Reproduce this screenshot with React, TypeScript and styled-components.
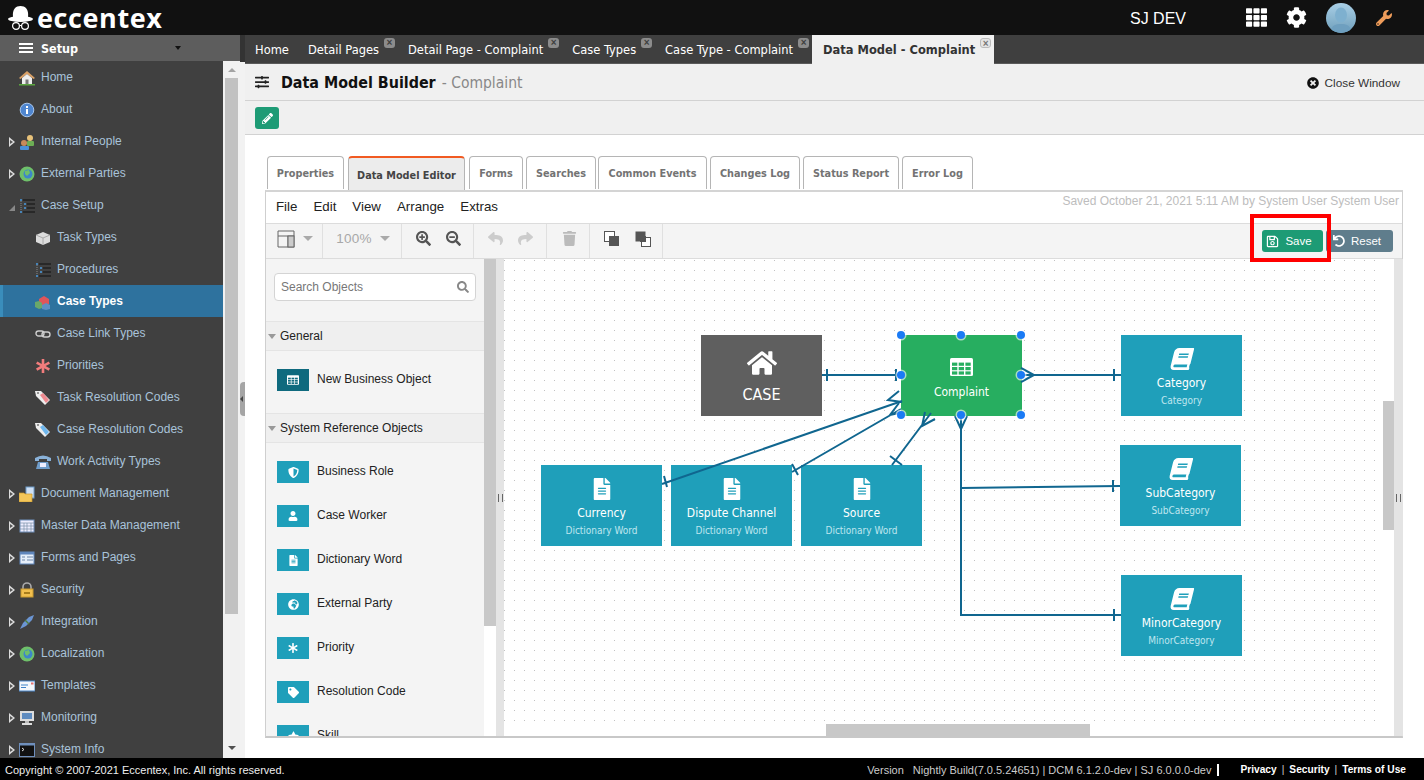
import React from "react";
import styled, { createGlobalStyle } from "styled-components";
import {
  FaHome, FaFileAlt, FaBook, FaRegSave, FaUndo, FaReply, FaShare, FaPencilAlt, FaTrash, FaCog, FaTh,
  FaTimesCircle, FaSlidersH, FaSearch, FaSearchPlus, FaSearchMinus, FaStar, FaTag, FaAsterisk,
  FaGlobeAfrica, FaUser, FaShieldAlt, FaWrench,
} from "react-icons/fa";

const tahoma = `"DejaVu Sans Condensed", "Noto Sans", sans-serif`;
const arial = `"Liberation Sans", Arial, sans-serif`;

const Global = createGlobalStyle`
  html, body { margin: 0; padding: 0; height: 100%; overflow: hidden; background: #fff; }
  * { box-sizing: border-box; }
  #root { height: 100%; }
`;

const Page = styled.div`
  width: 1424px; height: 780px; display: flex; flex-direction: column; font-family: ${arial}; overflow: hidden;
`;
const TopBar = styled.header`
  height: 35px; background: #111; display: flex; align-items: center; flex: none; padding-left: 8px; color: #fff;
`;
const LogoText = styled.span`
  font-family: "Open Sans", sans-serif; font-weight: 700; font-size: 27px; line-height: 35px; margin-left: 4px; letter-spacing: 0.6px;
`;
const Spacer = styled.div`flex: 1;`;
const EnvName = styled.span`
  font-size: 16px; width: 116px; margin-top: 3px;
`;
const TopIcons = styled.div`
  display: flex; align-items: center; width: 178px;
`;
const Avatar = styled.div`
  width: 30px; height: 30px; border-radius: 50%; background: linear-gradient(#a9cfe6, #6f9fbb); margin: 0 0 0 19px; overflow: hidden; display: flex;
`;
const Body = styled.div`flex: 1; display: flex; min-height: 0;`;
const Side = styled.aside`
  width: 240px; flex: none; display: flex; flex-direction: column;
`;
const SetupHead = styled.div`
  height: 26px; background: #5d5d5d; display: flex; align-items: center; padding-left: 19px; color: #fff; flex: none; position: relative;
`;
const Burger = styled.div`
  width: 14px; height: 10px; border-top: 2px solid #fff; border-bottom: 2px solid #fff; position: relative; margin-right: 8px;
  &::after { content: ""; position: absolute; left: 0; right: 0; top: 2px; height: 2px; background: #fff; }
`;
const SetupLabel = styled.span`
  font-family: ${tahoma}; font-weight: 700; font-size: 12.5px; flex: 1;
`;
const SetupCaret = styled.span`
  width: 0; height: 0; border: 3px solid transparent; border-top: 4px solid #111; margin: 3px 59px 0 0;
`;
const SideBody = styled.div`flex: 1; display: flex; min-height: 0;`;
const MenuList = styled.nav`
  width: 223px; background: #404040; overflow: hidden;
`;
const MenuRow = styled.div<{ $level: number; $active?: boolean }>`
  height: 32px; display: flex; align-items: center; position: relative;
  padding-left: ${(p) => (p.$level ? 35 : 19)}px;
  background: ${(p) => (p.$active ? "#2e729e" : "transparent")};
  border-left: ${(p) => (p.$active ? "3px solid #3a8dbb" : "0")};
  ${(p) => p.$active && "padding-left: 32px;"}
`;
const MenuIconBox = styled.span`
  width: 16px; height: 16px; display: block; flex: none; margin-top: 2px;
`;
const MenuLabel = styled.span<{ $active?: boolean }>`
  font-size: 12px; margin-left: 6px; margin-top: -1px; white-space: nowrap;
  color: ${(p) => (p.$active ? "#fff" : "#a9c3da")};
  font-weight: ${(p) => (p.$active ? 700 : 400)};
`;
const Expander = styled.span<{ $open?: boolean }>`
  position: absolute; left: 9px; top: 12px; width: 0; height: 0;
  border-style: solid; border-width: 5px 0 5px 6px; border-color: transparent transparent transparent #ddd;
  &::after {
    content: ""; position: absolute; left: -5px; top: -2px; width: 0; height: 0;
    border-style: solid; border-width: 2px 0 2px 3px; border-color: transparent transparent transparent #555;
  }
  ${(p) => p.$open && `
    border-width: 0 0 6px 6px; border-color: transparent transparent #888 transparent; top: 16px;
    &::after { display: none; }
  `}
`;
const SideScroll = styled.div`
  width: 17px; background: #f1f1f1; position: relative; display: flex; flex-direction: column; align-items: center; padding: 17px 0 144px;
  &::before { content: ""; position: absolute; top: 7px; border: 4px solid transparent; border-top: 0; border-bottom: 4px solid #a3a3a3; }
  &::after { content: ""; position: absolute; bottom: 8px; border: 4px solid transparent; border-bottom: 0; border-top: 4px solid #505050; }
`;
const ScrollThumb = styled.div`
  width: 13px; flex: 1; background: #c1c1c1;
`;
const Gutter = styled.div`
  width: 5px; flex: none; background: #f2f2f2; display: flex; flex-direction: column; align-items: center; justify-content: flex-start; padding-top: 347px;
  box-shadow: inset 0 27px 0 #333;
`;
const GutterHandle = styled.div`
  width: 5px; height: 34px; background: #a5a5a5; border-radius: 4px 0 0 4px; display: flex; align-items: center;
  &::after { content: ""; border: 3px solid transparent; border-left: 0; border-right: 3px solid #444; }
`;
const Main = styled.main`flex: 1; display: flex; flex-direction: column; min-width: 0;`;
const TabBar = styled.div`
  height: 29px; background: #3f3f3f; display: flex; flex: none; border-bottom: 1px solid #5a5a5a;
`;
const TopTab = styled.div<{ $active?: boolean; $close?: boolean }>`
  height: 29px; line-height: 29px; font-family: ${tahoma}; font-size: 12.75px; white-space: nowrap; position: relative;
  color: ${(p) => (p.$active ? "#333" : "#fff")};
  background: ${(p) => (p.$active ? "#f0f0f0" : "transparent")};
  padding: 0 ${(p) => (p.$close ? 19 : 9)}px 0 ${(p) => (p.$active ? 11 : 10)}px;
  font-weight: ${(p) => (p.$active ? 600 : 400)};
`;
const TabClose = styled.span<{ $active?: boolean }>`
  position: absolute; right: 3px; top: 3px; width: 11px; height: 10px; border-radius: 3px;
  background: ${(p) => (p.$active ? "#e4e4e4" : "#8c8c8c")};
  border: ${(p) => (p.$active ? "1px solid #bbb" : "0")};
  color: ${(p) => (p.$active ? "#777" : "#3f3f3f")};
  font: 700 10px/10px ${arial}; text-align: center;
`;
const TitleRow = styled.div`
  height: 37px; background: #f0f0f0; border-bottom: 1px solid #d2d2d2; display: flex; align-items: center; padding: 0 24px 0 10px; flex: none;
`;
const Title = styled.h1`
  margin: 0 0 0 12px; font-family: ${tahoma}; font-size: 15.9px; font-weight: 700; color: #111;
`;
const SubTitle = styled.span`
  font-family: ${tahoma}; font-size: 15.5px; color: #888; margin: 1px 0 0 6px; flex: 1;
`;
const CloseWindow = styled.span`
  font-size: 11.8px; color: #333; display: flex; align-items: center; gap: 6px; margin-top: 2px;
`;
const ActionRow = styled.div`
  height: 34px; background: #f0f0f0; border-bottom: 1px solid #d2d2d2; padding: 6px 10px; flex: none;
`;
const EditBtn = styled.div`
  width: 24px; height: 22px; border-radius: 3px; background: #1d9b75; color: #fff; display: flex; align-items: center; justify-content: center;
`;
const Content = styled.div`
  flex: 1; background: #fff; padding: 21px 21px 20px 20px; display: flex; flex-direction: column; min-height: 0; position: relative;
`;
const FormTabs = styled.div`
  height: 34px; display: flex; padding-left: 2px; flex: none; position: relative; z-index: 1;
`;
const FormTab = styled.div<{ $w: number; $gap: number; $active?: boolean }>`
  width: ${(p) => p.$w}px; margin-right: ${(p) => p.$gap}px; height: ${(p) => (p.$active ? 34 : 33)}px;
  border: 1px solid #b5b5b5; border-bottom: 0; border-radius: 4px 4px 0 0; text-align: center;
  font-family: ${tahoma}; font-size: 10.8px; font-weight: 700;
  line-height: ${(p) => (p.$active ? 35 : 34)}px;
  color: ${(p) => (p.$active ? "#444" : "#737373")};
  background: ${(p) => (p.$active ? "#ececec" : "#fff")};
  ${(p) => p.$active && "border-top: 2px solid #f15a22;"}
`;
const Frame = styled.section`
  width: 1138px; flex: 1; border: 1px solid #cfcfcf; border-top: 2px solid #d4d4d4; border-bottom: 2px solid #c8c8c8; display: flex; flex-direction: column; min-height: 0; background: #fff;
`;
const MenuBar = styled.div`
  height: 32px; flex: none; border-bottom: 1px solid #dcdcdc; display: flex; padding-left: 10px; gap: 16px; position: relative; font-size: 13.3px; line-height: 29px; color: #222;
`;
const SavedNote = styled.span`
  position: absolute; right: 3px; top: 0; line-height: 18px; font-size: 12px; color: #bdbdbd;
`;
const ToolBar = styled.div`
  height: 35px; flex: none; background: #f4f4f4; border-bottom: 1px solid #dcdcdc; display: flex; align-items: stretch;
`;
const ToolGroup = styled.div<{ $w: number; $shift?: number; $color?: string }>`
  width: ${(p) => p.$w}px; border-right: 1px solid #e0e0e0; display: flex; align-items: center; justify-content: center; gap: 15px;
  color: ${(p) => p.$color || "#555"}; padding: 0 0 5px ${(p) => p.$shift || 0}px;
`;
const Caret = styled.span`
  width: 0; height: 0; border: 5px solid transparent; border-bottom: 0; border-top: 5px solid #aaa; margin-left: -7px;
`;
const Zoom = styled.span`
  font-size: 13.5px; color: #a8a8a8; letter-spacing: 0.2px;
`;
const ToolRight = styled.div`
  flex: 1; display: flex; align-items: center; justify-content: flex-end; padding: 0 9px 0 0; gap: 3px;
`;
const ActionBtn = styled.div<{ $bg: string; $w: number; $pr: number }>`
  width: ${(p) => p.$w}px; height: 22px; border-radius: 3px; background: ${(p) => p.$bg}; color: #fff; font-size: 11.5px;
  display: flex; align-items: center; justify-content: center; gap: 6px; padding-right: ${(p) => p.$pr}px;
`;
const RedBox = styled.div`
  position: absolute; left: 1005px; top: 79px; width: 81px; height: 48px; border: 4px solid #f00;
`;
const EditorBody = styled.div`flex: 1; display: flex; min-height: 0;`;
const Palette = styled.div`
  width: 218px; background: #f4f4f4; overflow: hidden; flex: none;
`;
const SearchWrap = styled.div`padding: 14px 8px 20px;`;
const SearchBox = styled.div`
  height: 28px; background: #fff; border: 1px solid #d4d4d4; border-radius: 4px; display: flex; align-items: center; justify-content: space-between; padding: 0 6px; font-size: 12px; color: #777;
`;
const SectionHead = styled.div`
  height: 30px; background: #efefef; border-top: 1px solid #e4e4e4; border-bottom: 1px solid #e4e4e4; display: flex; align-items: center; font-size: 12px; color: #222; padding-left: 2px; gap: 4px;
  &::before { content: ""; border: 4px solid transparent; border-bottom: 0; border-top: 5px solid #999; }
`;
const ItemList = styled.div`
  padding: 18px 0 22px 11px; display: flex; flex-direction: column; gap: 22px;
`;
const Item = styled.div`
  height: 22px; display: flex; align-items: center; gap: 8px; font-size: 12px; color: #222;
`;
const ItemIcon = styled.span<{ $dark?: boolean }>`
  width: 32px; height: 22px; background: ${(p) => (p.$dark ? "#0f6a7e" : "#1f9fba")}; color: #fff; display: flex; align-items: center; justify-content: center; flex: none;
`;
const ItemLabel = styled.span`margin-top: -3px;`;
const VScroll = styled.div<{ $top: number; $h: number; $ml?: number }>`
  width: 12px; flex: none; background: #fff; padding-top: ${(p) => p.$top}px; margin-left: ${(p) => p.$ml || 0}px;
  &::before { content: ""; display: block; height: ${(p) => p.$h}px; background: #c8c8c8; }
`;
const Splitter = styled.div<{ $w: number; $mt: number }>`
  width: ${(p) => p.$w}px; flex: none; background: #e4e4e4; padding-top: ${(p) => p.$mt}px; display: flex; justify-content: center;
  &::before { content: ""; width: 3px; height: 8px; border-left: 1px solid #666; border-right: 1px solid #666; }
`;
const CanvasCol = styled.div`
  width: 879px; flex: none; display: flex; flex-direction: column;
`;
const Canvas = styled.div`
  flex: 1; position: relative; overflow: hidden; background-color: #fff;
  background-image: radial-gradient(circle at 0.5px 0.5px, #c2c2c2 0.7px, transparent 0.7px);
  background-size: 10px 10px; background-position: 0 1px;
`;
const HScroll = styled.div`
  height: 12px; flex: none; background: #fff; padding-left: 322px;
  &::before { content: ""; display: block; width: 264px; height: 12px; background: #c8c8c8; }
`;
const Lines = styled.svg`
  position: absolute; left: 0; top: 0; z-index: 2; pointer-events: none;
`;
const Node = styled.div<{ $x: number; $y: number; $bg: string }>`
  position: absolute; left: ${(p) => p.$x - 504}px; top: ${(p) => p.$y - 259}px; width: 121px; height: 81px; background: ${(p) => p.$bg};
  color: #fff; display: flex; flex-direction: column; align-items: center; font-family: ${tahoma}; text-align: center;
`;
const NodeIcon = styled.div<{ $mt: number }>`
  margin-top: ${(p) => p.$mt}px; height: 24px; display: flex; align-items: center; justify-content: center;
`;
const NodeName = styled.div<{ $size: number; $mt: number }>`
  font-size: ${(p) => p.$size}px; line-height: 16px; margin-top: ${(p) => p.$mt}px; white-space: nowrap;
`;
const NodeSub = styled.div`
  font-size: 10px; line-height: 12px; margin-top: 4px; color: #bfe6ef; white-space: nowrap;
`;
const Footer = styled.footer`
  height: 22px; background: #000; flex: none; display: flex; align-items: center; padding: 1px 18px 0 5px; font-size: 11px; color: #ddd; white-space: nowrap;
`;
const Copy = styled.span`flex: 1; color: #eee;`;
const Version = styled.span`margin-right: 9px; color: #ccc;`;
const Build = styled.span`color: #ccc; padding-right: 6px; border-right: 2px solid #fff; line-height: 12px; margin-right: 21px;`;
const Links = styled.span`color: #fff; font-weight: 700; font-size: 10.2px;`;
const LinkSep = styled.span`font-weight: 400; margin: 0 5px; color: #ccc;`;

const TableGlyph = ({ w, h, cell }: { w: number; h: number; cell: string }) => (
  <svg width={w} height={h} viewBox="0 0 23 18">
    <rect width="23" height="18" rx="1.5" fill="#fff" />
    {[0, 1, 2].map((r) =>
      [0, 1, 2].map((c) => (
        <rect key={`${r}${c}`} x={2 + c * 6.7} y={4.6 + r * 4.4} width="5.3" height="3.2" fill={cell} />
      ))
    )}
  </svg>
);

type Kind = "home" | "info" | "people" | "globe" | "tree" | "brick" | "bricks" | "link" | "star" | "tagR" | "tagB" | "phone" | "doc" | "grid" | "form" | "lock" | "plug" | "mail" | "monitor" | "term";

const Drawn: Record<Kind, React.ReactNode> = {
  home: <><path d="M0 8 8 1l8 7-1.5 1L8 4 1.5 9z" fill="#d9a066" /><path d="M3 8l5-4 5 4v6H3z" fill="#eee" /><rect x="6.5" y="9.5" width="3" height="4.5" fill="#777" /><rect x="0" y="14" width="16" height="1.5" fill="#5aa63f" /></>,
  info: <><circle cx="8" cy="8" r="6.8" fill="#4f86d0" stroke="#a9c8ef" /><rect x="7" y="7" width="2" height="5" fill="#fff" /><rect x="7" y="4" width="2" height="2" fill="#fff" /></>,
  people: <><circle cx="11" cy="4" r="3" fill="#e8c27a" /><rect x="8" y="7" width="7" height="5" rx="1" fill="#6dae55" /><circle cx="5" cy="9" r="3" fill="#c98a5a" /><rect x="1" y="12" width="9" height="4" rx="1" fill="#4a90d9" /></>,
  globe: <><circle cx="8" cy="8" r="7.5" fill="#6fc06a" /><circle cx="9" cy="8" r="4.5" fill="#3e86c9" /><path d="M6 5l4-1 1 3-3 3-2-2z" fill="#6fc06a" /></>,
  tree: <><circle cx="2" cy="2" r="1" fill="#4a9be0" /><circle cx="6" cy="6" r="1" fill="#4a9be0" /><circle cx="6" cy="10" r="1" fill="#4a9be0" /><circle cx="2" cy="14" r="1" fill="#4a9be0" /><path d="M4 2h12M8 6h8M8 10h8M4 14h12" stroke="#111" strokeWidth="1" /><path d="M2 3v10" stroke="#888" strokeDasharray="1 1" /></>,
  brick: <><path d="M1 5l7-3 7 3v7l-7 3-7-3z" fill="#ddd" /><path d="M1 5l7 3 7-3M8 8v7" stroke="#aaa" fill="none" /></>,
  bricks: <><path d="M4 5l5-3 5 3v5l-5 2-5-2z" fill="#e0555a" /><path d="M0 8l4-1 3 2v5l-3 1-4-2z" fill="#6aa86a" /><path d="M7 11l4-2 4 2v4l-4 1-4-1z" fill="#5d8fc4" /></>,
  link: <><rect x="1" y="5" width="8" height="5" rx="2.5" fill="none" stroke="#ccc" strokeWidth="1.4" /><rect x="7" y="6" width="8" height="5" rx="2.5" fill="none" stroke="#ccc" strokeWidth="1.4" /></>,
  star: <path d="M6.7 1h2.6v5l4.4-2.4 1.3 2.2L10.6 8l4.4 2.6-1.3 2.2-4.4-2.5V15H6.7v-4.7l-4.4 2.5L1 10.6 5.4 8 1 5.8l1.3-2.2L6.7 6z" fill="#f27c7c" />,
  tagR: <><path d="M0 1h6l9 9-5 5-9-9z" fill="#eee" /><path d="M5 5l3-2 6 7-3 3z" fill="#ef8a90" /><circle cx="3" cy="3" r="1" fill="#777" /></>,
  tagB: <><path d="M0 1h6l9 9-5 5-9-9z" fill="#eee" /><path d="M5 5l3-2 6 7-3 3z" fill="#6eb7ee" /><circle cx="3" cy="3" r="1" fill="#777" /></>,
  phone: <><path d="M0 4q8-5 16 0v3h-4V5H4v2H0z" fill="#8ab2d9" /><path d="M3 8h10l2 7H1z" fill="#6f9cc9" /><rect x="5" y="9" width="6" height="4" fill="#eef" /></>,
  doc: <><rect x="7" y="1" width="8" height="11" fill="#cfe0f5" stroke="#6f9cc9" /><path d="M0 7h5l1 1h7v8H0z" fill="#f3c65a" stroke="#c99a2e" strokeWidth="0.7" /></>,
  grid: <><rect x="1" y="2" width="14" height="12" fill="#eef" stroke="#6f8fbc" /><path d="M1 5h14M1 8h14M1 11h14M5 5v9M8 5v9M12 5v9" stroke="#7a8fa8" strokeWidth="0.7" /></>,
  form: <><rect x="1" y="2" width="14" height="12" fill="#e6effa" stroke="#5f86bc" /><rect x="1" y="2" width="14" height="2.5" fill="#5f86bc" /><path d="M3 7h3M8 7h6M3 10h3M8 10h6" stroke="#6d86a8" /></>,
  lock: <><path d="M4 8V5a4 4 0 0 1 8 0v3" fill="none" stroke="#aaa" strokeWidth="1.6" /><rect x="2" y="7" width="12" height="8" fill="#f1bf4e" stroke="#c99a2e" /><rect x="5" y="10" width="6" height="2" fill="#a87d1c" /></>,
  plug: <><path d="M1 15 4 9 10 3l5-2-2 5-6 6z" fill="#6b95d3" /><path d="M6 6l4 4" stroke="#4f7c3c" strokeWidth="1.4" /></>,
  mail: <><rect x="0" y="3" width="16" height="10" fill="#f3f7fc" stroke="#4a86c9" /><path d="M2 7h7M2 9.5h5" stroke="#3f83c9" /><rect x="12" y="4.5" width="2.5" height="2" fill="#e57373" /></>,
  monitor: <><rect x="1" y="1" width="14" height="10" fill="#ddd" /><rect x="3" y="3" width="10" height="6" fill="#5f8cc0" /><rect x="6" y="11" width="4" height="2" fill="#bbb" /><rect x="3" y="13" width="10" height="2" fill="#ddd" /></>,
  term: <><rect x="0.5" y="1.5" width="15" height="13" fill="#111" stroke="#6f8fbc" /><rect x="1" y="2" width="14" height="1.5" fill="#6f8fbc" /><path d="M3 6l2 1.5L3 9" stroke="#ddd" fill="none" /></>,
};

const MenuIcon = ({ kind }: { kind: Kind }) => (
  <MenuIconBox><svg width="16" height="16" viewBox="0 0 16 16">{Drawn[kind]}</svg></MenuIconBox>
);

const menu: { label: string; kind: Kind; level: number; exp?: "closed" | "open"; active?: boolean }[] = [
  { label: "Home", kind: "home", level: 0 },
  { label: "About", kind: "info", level: 0 },
  { label: "Internal People", kind: "people", level: 0, exp: "closed" },
  { label: "External Parties", kind: "globe", level: 0, exp: "closed" },
  { label: "Case Setup", kind: "tree", level: 0, exp: "open" },
  { label: "Task Types", kind: "brick", level: 1 },
  { label: "Procedures", kind: "tree", level: 1 },
  { label: "Case Types", kind: "bricks", level: 1, active: true },
  { label: "Case Link Types", kind: "link", level: 1 },
  { label: "Priorities", kind: "star", level: 1 },
  { label: "Task Resolution Codes", kind: "tagR", level: 1 },
  { label: "Case Resolution Codes", kind: "tagB", level: 1 },
  { label: "Work Activity Types", kind: "phone", level: 1 },
  { label: "Document Management", kind: "doc", level: 0, exp: "closed" },
  { label: "Master Data Management", kind: "grid", level: 0, exp: "closed" },
  { label: "Forms and Pages", kind: "form", level: 0, exp: "closed" },
  { label: "Security", kind: "lock", level: 0, exp: "closed" },
  { label: "Integration", kind: "plug", level: 0, exp: "closed" },
  { label: "Localization", kind: "globe", level: 0, exp: "closed" },
  { label: "Templates", kind: "mail", level: 0, exp: "closed" },
  { label: "Monitoring", kind: "monitor", level: 0, exp: "closed" },
  { label: "System Info", kind: "term", level: 0, exp: "closed" },
];

const topTabs = [
  { label: "Home" },
  { label: "Detail Pages", close: true },
  { label: "Detail Page - Complaint", close: true },
  { label: "Case Types", close: true },
  { label: "Case Type - Complaint", close: true },
  { label: "Data Model - Complaint", close: true, active: true },
];
const formTabs = [
  { label: "Properties", w: 77, gap: 4 },
  { label: "Data Model Editor", w: 117, gap: 4 },
  { label: "Forms", w: 54, gap: 3 },
  { label: "Searches", w: 70, gap: 2 },
  { label: "Common Events", w: 109, gap: 3 },
  { label: "Changes Log", w: 90, gap: 3 },
  { label: "Status Report", w: 96, gap: 3 },
  { label: "Error Log", w: 71, gap: 0 },
];
const sys: { label: string; icon: React.ReactNode }[] = [
  { label: "Business Role", icon: <FaShieldAlt size={11} /> },
  { label: "Case Worker", icon: <FaUser size={10} /> },
  { label: "Dictionary Word", icon: <FaFileAlt size={11} /> },
  { label: "External Party", icon: <FaGlobeAfrica size={11} /> },
  { label: "Priority", icon: <FaAsterisk size={10} /> },
  { label: "Resolution Code", icon: <FaTag size={11} /> },
  { label: "Skill", icon: <FaStar size={11} /> },
];
const blue = "#1f9fba";
const book = <FaBook size={22} style={{ transform: "skewX(-14deg)" }} />;
const nodes = [
  { x: 701, y: 335, bg: "#5f5f5f", name: "CASE", icon: <FaHome size={30} />, size: 16, mt: 16, nameMt: 12 },
  { x: 901, y: 335, bg: "#27ae60", name: "Complaint", icon: <TableGlyph w={23} h={18} cell="#27ae60" />, size: 12, mt: 20, nameMt: 5 },
  { x: 1121, y: 335, bg: blue, name: "Category", sub: "Category", icon: book, size: 12, mt: 12, nameMt: 4 },
  { x: 1120, y: 445, bg: blue, name: "SubCategory", sub: "SubCategory", icon: book, size: 12, mt: 12, nameMt: 4 },
  { x: 1121, y: 575, bg: blue, name: "MinorCategory", sub: "MinorCategory", icon: book, size: 12, mt: 12, nameMt: 4 },
  { x: 541, y: 465, bg: blue, name: "Currency", sub: "Dictionary Word", icon: <FaFileAlt size={22} />, size: 12, mt: 12, nameMt: 4 },
  { x: 671, y: 465, bg: blue, name: "Dispute Channel", sub: "Dictionary Word", icon: <FaFileAlt size={22} />, size: 12, mt: 12, nameMt: 4 },
  { x: 801, y: 465, bg: blue, name: "Source", sub: "Dictionary Word", icon: <FaFileAlt size={22} />, size: 12, mt: 12, nameMt: 4 },
];
const handles = [[901, 335], [961, 335], [1021, 335], [901, 375], [1021, 375], [901, 415], [961, 415], [1021, 415]];

const linePaths = [
  "M822 375H901M827 369V381M896 369V381",
  "M1022 375H1121M1114 369V381M1021 368L1034 375L1021 382",
  "M961 416V615H1121M1114 609V621M955 416L961 429L967 416",
  "M961 488L1120 486M1113 480V492",
  "M662 484L902 401M664 476L667 487M899 391L888 400L902 402",
  "M792 472L901 409M792 464L798 475M899 403L890 415L904 412",
  "M892 465L931 413M890 456L902 465M925 412L922 426L935 419",
];

export default function App() {
  return (
    <Page>
      <Global />
      <TopBar>
        <svg width="25" height="26" viewBox="0 0 25 26">
          <path d="M5 12C4 4 8 1 12.5 1S21 4 20 12z" fill="#fff" />
          <ellipse cx="12.5" cy="14" rx="12.5" ry="3" fill="#fff" />
          <circle cx="8" cy="21" r="3.4" fill="none" stroke="#fff" strokeWidth="1.2" />
          <circle cx="17" cy="21" r="3.4" fill="none" stroke="#fff" strokeWidth="1.2" />
          <path d="M11.4 20.5h2.2" stroke="#fff" />
        </svg>
        <LogoText>eccentex</LogoText>
        <Spacer />
        <EnvName>SJ DEV</EnvName>
        <TopIcons>
          <FaTh size={21} color="#fff" />
          <FaCog size={21} color="#fff" style={{ marginLeft: 19 }} />
          <Avatar>
            <svg width="30" height="30" viewBox="0 0 30 30">
              <ellipse cx="15" cy="12" rx="6" ry="7.5" fill="#7eb0cf" />
              <path d="M4 30c1-8 6-9 11-9s10 1 11 9z" fill="#6e9fbf" />
            </svg>
          </Avatar>
          <FaWrench size={16} color="#ee9c5a" style={{ marginLeft: 20 }} />
        </TopIcons>
      </TopBar>
      <Body>
        <Side>
          <SetupHead>
            <Burger />
            <SetupLabel>Setup</SetupLabel>
            <SetupCaret />
          </SetupHead>
          <SideBody>
            <MenuList>
              {menu.map((m) => (
                <MenuRow key={m.label + m.level} $level={m.level} $active={m.active}>
                  {m.exp && <Expander $open={m.exp === "open"} />}
                  <MenuIcon kind={m.kind} />
                  <MenuLabel $active={m.active}>{m.label}</MenuLabel>
                </MenuRow>
              ))}
            </MenuList>
            <SideScroll><ScrollThumb /></SideScroll>
          </SideBody>
        </Side>
        <Gutter><GutterHandle /></Gutter>
        <Main>
          <TabBar>
            {topTabs.map((t) => (
              <TopTab key={t.label} $active={t.active} $close={t.close}>
                {t.label}
                {t.close && <TabClose $active={t.active}>×</TabClose>}
              </TopTab>
            ))}
          </TabBar>
          <TitleRow>
            <FaSlidersH size={14} color="#222" />
            <Title>Data Model Builder</Title>
            <SubTitle>- Complaint</SubTitle>
            <CloseWindow><FaTimesCircle size={12} color="#111" /> Close Window</CloseWindow>
          </TitleRow>
          <ActionRow>
            <EditBtn><FaPencilAlt size={11} /></EditBtn>
          </ActionRow>
          <Content>
            <FormTabs>
              {formTabs.map((t) => (
                <FormTab key={t.label} $w={t.w} $gap={t.gap} $active={t.label === "Data Model Editor"}>{t.label}</FormTab>
              ))}
            </FormTabs>
            <Frame>
              <MenuBar>
                <span>File</span><span>Edit</span><span>View</span><span>Arrange</span><span>Extras</span>
                <SavedNote>Saved October 21, 2021 5:11 AM by System User System User</SavedNote>
              </MenuBar>
              <ToolBar>
                <ToolGroup $w={57} $shift={2}>
                  <svg width="18" height="18" viewBox="0 0 18 18"><path d="M1 1h16v16H1zM1 6h16M11 6v11" fill="none" stroke="#666" /><rect x="11" y="6" width="6" height="11" fill="#ccc" stroke="#666" /></svg>
                  <Caret />
                </ToolGroup>
                <ToolGroup $w={79} $shift={2}><Zoom>100%</Zoom><Caret /></ToolGroup>
                <ToolGroup $w={72} $shift={1}><FaSearchPlus size={15} /><FaSearchMinus size={15} /></ToolGroup>
                <ToolGroup $w={73} $shift={1} $color="#ccc"><FaReply size={15} /><FaShare size={15} /></ToolGroup>
                <ToolGroup $w={43} $shift={2} $color="#bbb"><FaTrash size={15} /></ToolGroup>
                <ToolGroup $w={73} $shift={2}>
                  <svg width="16" height="16" viewBox="0 0 16 16"><rect x="0.5" y="0.5" width="10" height="10" fill="#fff" stroke="#555" /><rect x="5" y="5" width="10" height="10" fill="#555" /></svg>
                  <svg width="16" height="16" viewBox="0 0 16 16"><rect x="0.5" y="0.5" width="10" height="10" fill="#555" /><rect x="6.5" y="6.5" width="9" height="9" fill="#fff" stroke="#555" /><rect x="5" y="5" width="6" height="6" fill="#555" /></svg>
                </ToolGroup>
                <ToolRight>
                  <ActionBtn $bg="#1d9b75" $w={61} $pr={7}><FaRegSave size={13} />Save</ActionBtn>
                  <ActionBtn $bg="#5f7d8c" $w={67} $pr={5}><FaUndo size={12} />Reset</ActionBtn>
                </ToolRight>
              </ToolBar>
              <EditorBody>
                <Palette>
                  <SearchWrap>
                    <SearchBox>Search Objects<FaSearch size={12} color="#888" /></SearchBox>
                  </SearchWrap>
                  <SectionHead>General</SectionHead>
                  <ItemList>
                    <Item><ItemIcon $dark><TableGlyph w={12} h={10} cell="#0f6a7e" /></ItemIcon><ItemLabel>New Business Object</ItemLabel></Item>
                  </ItemList>
                  <SectionHead>System Reference Objects</SectionHead>
                  <ItemList>
                    {sys.map((s) => (
                      <Item key={s.label}><ItemIcon>{s.icon}</ItemIcon><ItemLabel>{s.label}</ItemLabel></Item>
                    ))}
                  </ItemList>
                </Palette>
                <VScroll $top={0} $h={367} />
                <Splitter $w={8} $mt={235} />
                <CanvasCol>
                  <Canvas>
                    {nodes.map((n) => (
                      <Node key={n.name} $x={n.x} $y={n.y} $bg={n.bg}>
                        <NodeIcon $mt={n.mt}>{n.icon}</NodeIcon>
                        <NodeName $size={n.size} $mt={n.nameMt}>{n.name}</NodeName>
                        {n.sub && <NodeSub>{n.sub}</NodeSub>}
                      </Node>
                    ))}
                    <Lines width="879" height="466" viewBox="504 259 879 466">
                      {linePaths.map((d) => (
                        <path key={d} d={d} fill="none" stroke="#10668f" strokeWidth="2" />
                      ))}
                      {handles.map(([x, y]) => (
                        <g key={`${x}-${y}`}>
                          <circle cx={x} cy={y} r="5.5" fill="#fff" opacity="0.6" />
                          <circle cx={x} cy={y} r="4" fill="#1a7bf5" />
                        </g>
                      ))}
                    </Lines>
                  </Canvas>
                  <HScroll />
                </CanvasCol>
                <VScroll $top={142} $h={129} $ml={-1} />
                <Splitter $w={9} $mt={235} />
              </EditorBody>
            </Frame>
            <RedBox />
          </Content>
        </Main>
      </Body>
      <Footer>
        <Copy>Copyright © 2007-2021 Eccentex, Inc. All rights reserved.</Copy>
        <Version>Version</Version>
        <Build>Nightly Build(7.0.5.24651) | DCM 6.1.2.0-dev | SJ 6.0.0.0-dev</Build>
        <Links>Privacy<LinkSep>|</LinkSep>Security<LinkSep>|</LinkSep>Terms of Use</Links>
      </Footer>
    </Page>
  );
}
